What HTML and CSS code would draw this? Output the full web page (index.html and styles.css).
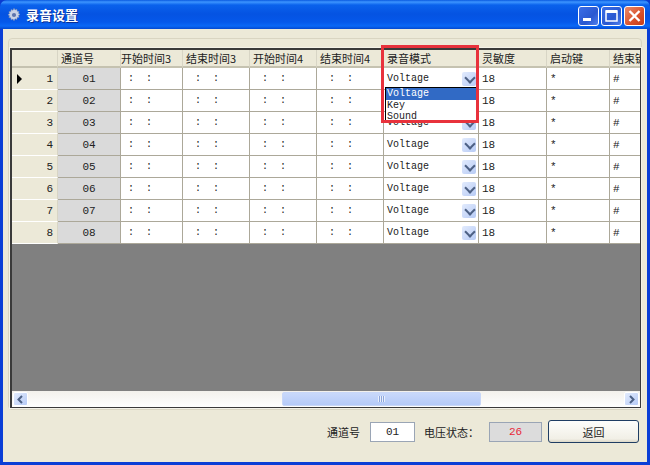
FILE: index.html
```html
<!DOCTYPE html>
<html lang="zh">
<head>
<meta charset="utf-8">
<title>录音设置</title>
<link rel="stylesheet" href="styles.css">
</head>
<body>
<div class="window">
  <header class="titlebar">
    <svg class="appicon" width="14" height="14" viewBox="0 0 16 16"><g fill="#c9d3e6" stroke="#7f8db0" stroke-width=".6"><path d="M8 1l1.3 2 2.2-.9.3 2.4 2.4.3-.9 2.2 2 1.3-2 1.3.9 2.2-2.4.3-.3 2.4-2.2-.9L8 16l-1.3-2-2.2.9-.3-2.4-2.4-.3.9-2.2-2-1.3 2-1.3-.9-2.2 2.4-.3.3-2.4 2.2.9z" transform="translate(.4 -.6) scale(.95)"/></g><circle cx="8" cy="8" r="2.4" fill="#5d75ad"/></svg>
    <span class="title">录音设置</span>
    <div class="controls">
      <button class="ctl"><svg width="21" height="20" viewBox="0 0 21 20"><rect x="5" y="12" width="8" height="3" fill="#fff"/></svg></button>
      <button class="ctl"><svg width="21" height="20" viewBox="0 0 21 20"><rect x="5" y="5" width="11" height="10" fill="none" stroke="#fff" stroke-width="1.5"/><rect x="5" y="4" width="11" height="3" fill="#fff"/></svg></button>
      <button class="ctl close"><svg width="21" height="20" viewBox="0 0 21 20"><path d="M5.5 5l10 10M15.5 5l-10 10" stroke="#fff" stroke-width="2.4"/></svg></button>
    </div>
  </header>
  <main class="content">
    <section class="group">
      <div class="gridframe">
        <div class="gridview">
          <table class="grid">
            <colgroup><col class="c0"><col class="c1"><col class="c2"><col class="c3"><col class="c4"><col class="c5"><col class="c6"><col class="c7"><col class="c8"><col class="c9"></colgroup>
            <thead><tr><th class="corner"></th><th>通道号</th><th class="tight">开始时间3</th><th>结束时间3</th><th>开始时间4</th><th>结束时间4</th><th>录音模式</th><th>灵敏度</th><th>启动键</th><th>结束键</th></tr></thead>
            <tbody>
              <tr><td class="rh current">1</td><td class="ch">01</td><td class="t">:&nbsp;&nbsp;:</td><td class="t">:&nbsp;&nbsp;:</td><td class="t">:&nbsp;&nbsp;:</td><td class="t">:&nbsp;&nbsp;:</td><td class="m"><div class="combo"><span>Voltage</span><i class="arrow"></i></div></td><td>18</td><td>*</td><td>#</td></tr>
              <tr><td class="rh">2</td><td class="ch">02</td><td class="t">:&nbsp;&nbsp;:</td><td class="t">:&nbsp;&nbsp;:</td><td class="t">:&nbsp;&nbsp;:</td><td class="t">:&nbsp;&nbsp;:</td><td class="m"></td><td>18</td><td>*</td><td>#</td></tr>
              <tr><td class="rh">3</td><td class="ch">03</td><td class="t">:&nbsp;&nbsp;:</td><td class="t">:&nbsp;&nbsp;:</td><td class="t">:&nbsp;&nbsp;:</td><td class="t">:&nbsp;&nbsp;:</td><td class="m"><div class="combo"><span>Voltage</span><i class="arrow"></i></div></td><td>18</td><td>*</td><td>#</td></tr>
              <tr><td class="rh">4</td><td class="ch">04</td><td class="t">:&nbsp;&nbsp;:</td><td class="t">:&nbsp;&nbsp;:</td><td class="t">:&nbsp;&nbsp;:</td><td class="t">:&nbsp;&nbsp;:</td><td class="m"><div class="combo"><span>Voltage</span><i class="arrow"></i></div></td><td>18</td><td>*</td><td>#</td></tr>
              <tr><td class="rh">5</td><td class="ch">05</td><td class="t">:&nbsp;&nbsp;:</td><td class="t">:&nbsp;&nbsp;:</td><td class="t">:&nbsp;&nbsp;:</td><td class="t">:&nbsp;&nbsp;:</td><td class="m"><div class="combo"><span>Voltage</span><i class="arrow"></i></div></td><td>18</td><td>*</td><td>#</td></tr>
              <tr><td class="rh">6</td><td class="ch">06</td><td class="t">:&nbsp;&nbsp;:</td><td class="t">:&nbsp;&nbsp;:</td><td class="t">:&nbsp;&nbsp;:</td><td class="t">:&nbsp;&nbsp;:</td><td class="m"><div class="combo"><span>Voltage</span><i class="arrow"></i></div></td><td>18</td><td>*</td><td>#</td></tr>
              <tr><td class="rh">7</td><td class="ch">07</td><td class="t">:&nbsp;&nbsp;:</td><td class="t">:&nbsp;&nbsp;:</td><td class="t">:&nbsp;&nbsp;:</td><td class="t">:&nbsp;&nbsp;:</td><td class="m"><div class="combo"><span>Voltage</span><i class="arrow"></i></div></td><td>18</td><td>*</td><td>#</td></tr>
              <tr><td class="rh">8</td><td class="ch">08</td><td class="t">:&nbsp;&nbsp;:</td><td class="t">:&nbsp;&nbsp;:</td><td class="t">:&nbsp;&nbsp;:</td><td class="t">:&nbsp;&nbsp;:</td><td class="m"><div class="combo"><span>Voltage</span><i class="arrow"></i></div></td><td>18</td><td>*</td><td>#</td></tr>
            </tbody>
          </table>
          <ul class="dropdown">
            <li class="sel">Voltage</li>
            <li class="key">Key</li>
            <li>Sound</li>
          </ul>
        </div>
        <div class="scrollbar">
          <button class="sbtn"><svg width="9" height="9" viewBox="0 0 9 9"><path d="M6 1L2.5 4.5 6 8" fill="none" stroke="#4d6185" stroke-width="2"/></svg></button>
          <div class="track"><div class="thumb"><span class="grip"></span></div></div>
          <button class="sbtn"><svg width="9" height="9" viewBox="0 0 9 9"><path d="M3 1l3.5 3.5L3 8" fill="none" stroke="#4d6185" stroke-width="2"/></svg></button>
        </div>
        <div class="highlight"></div>
      </div>
    </section>
    <footer class="footer">
      <span class="lbl">通道号</span>
      <div class="field chan">01</div>
      <span class="lbl volt">电压状态：</span>
      <div class="field status">26</div>
      <button class="back">返回</button>
    </footer>
  </main>
</div>
</body>
</html>
```
FILE: styles.css
```css
* { box-sizing: border-box; }
html, body { margin: 0; padding: 0; }
body {
  width: 650px;
  height: 465px;
  overflow: hidden;
  background: #0a3bd0;
  font-family: "Noto Sans CJK SC", "Liberation Sans", sans-serif;
  font-size: 11px;
  color: #222;
}
.window {
  width: 650px;
  height: 465px;
  display: flex;
  flex-direction: column;
  border-radius: 7px 7px 0 0;
  overflow: hidden;
  background: #0a3ed6;
}
.titlebar {
  height: 29px;
  flex: none;
  display: flex;
  align-items: center;
  padding: 0 5px 0 7px;
  background: linear-gradient(#0a5ae0 0, #3d95ff 2px, #0a62ec 5px, #0553e2 14px, #0558ea 22px, #0a68f6 26px, #0348d0 29px);
}
.appicon { flex: none; }
.title {
  margin-left: 5px;
  color: #fff;
  font-size: 13px;
  font-weight: 700;
  text-shadow: 1px 1px 0 #0a2f95;
}
.controls { margin-left: auto; margin-top: 2px; display: flex; gap: 2px; }
.ctl {
  width: 21px;
  height: 20px;
  padding: 0;
  border: 1px solid #fff;
  border-radius: 3px;
  background: linear-gradient(135deg, #3b6ee8, #2a58d0 60%, #4f80ee);
}
.ctl svg { display: block; margin: -1px; }
.close { background: linear-gradient(135deg, #e88a6c, #d9502a 60%, #c53d18); }
.content {
  flex: 1;
  margin: 0 3px 3px 3px;
  display: flex;
  flex-direction: column;
  background: #ece9d8;
  padding: 9px 5px 0 5px;
}
.group {
  height: 372px;
  flex: none;
  border: 1px solid #d9d5c2;
  border-radius: 4px;
  padding: 9px 0 1px 1px;
}
.gridframe {
  position: relative;
  height: 360px;
  display: flex;
  flex-direction: column;
  border: 1px solid #3a3a3a;
  border-top-width: 2px;
  border-left-width: 2px;
  background: #808080;
  box-shadow: 0 0 0 1px #f4f2e8;
}
.gridview { position: relative; flex: 1; overflow: hidden; }
.grid {
  table-layout: fixed;
  border-collapse: separate;
  border-spacing: 0;
  width: 656px;
}
.c0 { width: 46px; } .c1 { width: 63px; } .c2 { width: 62px; } .c3 { width: 67px; }
.c4 { width: 67px; } .c5 { width: 67px; } .c6 { width: 95px; } .c7 { width: 68px; }
.c8 { width: 63px; } .c9 { width: 58px; }
.grid th {
  height: 18px;
  padding: 0 0 0 3px;
  background: #ece9d8;
  border-right: 1px solid #d8d5c5;
  border-bottom: 2px solid #c5c2b0;
  font-weight: 400;
  font-size: 11px;
  line-height: 15px;
  text-align: left;
  white-space: nowrap;
  overflow: hidden;
}
.grid th.tight { padding-left: 0; }
.grid td {
  height: 22px;
  padding: 1px 0 0 3px;
  background: #fff;
  border-right: 1px solid #aca899;
  border-bottom: 1px solid #aca899;
  font-family: "Liberation Mono", monospace;
  font-size: 11px;
  line-height: 14px;
  white-space: nowrap;
  overflow: hidden;
}
.grid td.rh {
  position: relative;
  background: #ece9d8;
  border-right: 1px solid #d8d5c5;
  border-bottom: 1px solid #fff;
  padding: 1px 4px 0 0;
  text-align: right;
}
.grid td.current::before {
  content: "";
  position: absolute;
  left: 5px;
  top: 6px;
  border-left: 5px solid #000;
  border-top: 5px solid transparent;
  border-bottom: 5px solid transparent;
}
.grid td.ch {
  background: #dadada;
  text-align: center;
  padding: 1px 0 0;
}
.grid td.t { font-size: 10px; padding-left: 12px; }
.grid td.ch + td.t { padding-left: 7px; }
.grid td.m { padding: 1px 2px 0 3px; }
.combo {
  display: flex;
  align-items: center;
  justify-content: space-between;
  font-size: 10px;
  height: 18px;
}
.arrow {
  width: 14px;
  height: 14px;
  display: block;
  position: relative;
  border-radius: 2px;
  background: linear-gradient(135deg, #e2ebfd, #b7cbf5);
}
.arrow::after {
  content: "";
  position: absolute;
  left: 4px;
  top: 2px;
  width: 6px;
  height: 6px;
  border-right: 2px solid #4d6185;
  border-bottom: 2px solid #4d6185;
  transform: rotate(45deg);
}
.dropdown {
  position: absolute;
  left: 373px;
  top: 37px;
  width: 93px;
  height: 35px;
  margin: 0;
  padding: 0;
  list-style: none;
  background: #fff;
  border: 1px solid #000;
  font-family: "Liberation Mono", monospace;
  font-size: 10px;
  line-height: 12px;
}
.dropdown li { height: 12px; padding-left: 1px; }
.dropdown .sel { background: #316ac5; color: #fff; }
.dropdown .key { height: 11px; line-height: 11px; }
.highlight {
  position: absolute;
  left: 369px;
  top: -5px;
  width: 98px;
  height: 78px;
  border: 3px solid #e8323c;
}
.scrollbar {
  height: 16px;
  flex: none;
  display: flex;
  align-items: center;
  padding: 0 1px;
  background: linear-gradient(#f3f1ec, #fefefe);
}
.sbtn {
  width: 15px;
  height: 14px;
  flex: none;
  padding: 0;
  display: flex;
  align-items: center;
  justify-content: center;
  border: 1px solid #fff;
  border-radius: 2px;
  background: linear-gradient(135deg, #e2ebfd, #b7cbf5);
}
.track { flex: 1; height: 14px; padding-left: 254px; }
.thumb {
  width: 199px;
  height: 14px;
  display: flex;
  align-items: center;
  justify-content: center;
  border: 1px solid #c8d7f8;
  border-radius: 2px;
  background: linear-gradient(#c9d9fb, #b5caf8);
}
.grip {
  width: 7px;
  height: 6px;
  background: repeating-linear-gradient(90deg, #e9effc 0 1px, #8ea7dc 1px 2px);
}
.footer {
  flex: 1;
  display: flex;
  align-items: center;
  justify-content: flex-end;
  padding: 0 3px 9px 0;
}
.lbl { font-size: 11px; color: #222; line-height: 16px; }
.volt { margin-left: 9px; }
.field {
  height: 20px;
  display: flex;
  align-items: center;
  justify-content: center;
  border: 1px solid #9aa5b5;
  font-family: "Liberation Mono", monospace;
  font-size: 11px;
}
.chan { width: 45px; margin-left: 10px; background: #fff; }
.status { width: 53px; margin-left: 10px; background: #dcdcdc; color: #e8283a; }
.back {
  width: 91px;
  height: 23px;
  margin-left: 6px;
  padding: 0;
  border: 1px solid #1f3d63;
  border-radius: 3px;
  background: linear-gradient(#fdfdfb, #f1efe6 85%, #dcd8c8);
  font-family: "Noto Sans CJK SC", sans-serif;
  font-size: 11px;
  color: #222;
}
```
